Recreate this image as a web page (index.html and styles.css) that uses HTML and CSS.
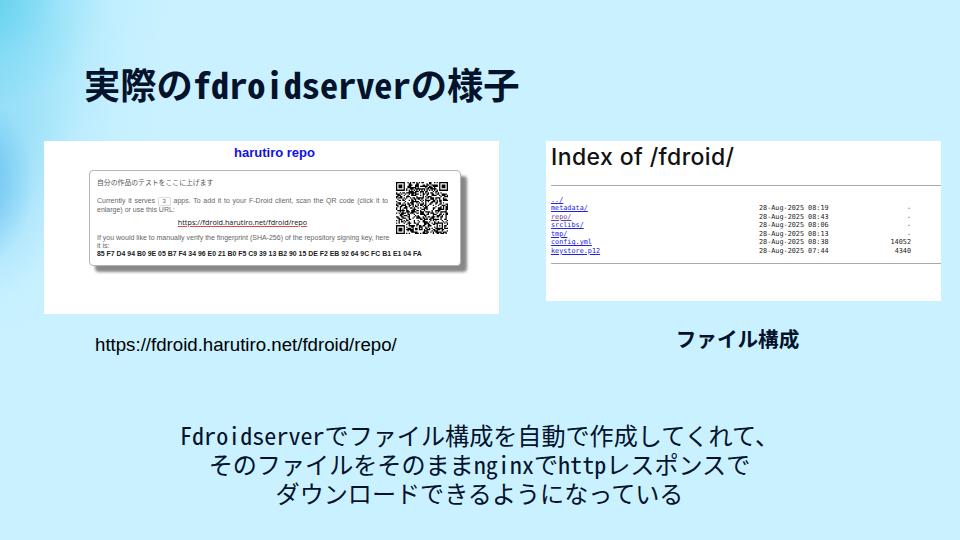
FILE: index.html
```
<!DOCTYPE html>
<html lang="ja">
<head>
<meta charset="utf-8">
<title>実際のfdroidserverの様子</title>
<link rel="stylesheet" href="styles.css">
</head>
<body>
<main class="slide">
  <h1 class="title">実際のfdroidserverの様子</h1>
  <div class="columns">
    <figure class="col repo-col">
      <div class="shot repo">
        <h2 class="repo-name">harutiro repo</h2>
        <div class="card">
          <svg class="qr" id="qr" viewBox="0 0 41 41"></svg>
          <p class="desc">自分の作品のテストをここに上げます</p>
          <div class="para">
            <p class="line fill">Currently it serves <span class="count">3</span> apps. To add it to your F-Droid client, scan the QR code (click it to</p>
            <p class="line">enlarge) or use this URL:</p>
          </div>
          <p class="url"><span>https://fdroid.harutiro.net/fdroid/repo</span></p>
          <p class="line fill">If you would like to manually verify the fingerprint (SHA-256) of the repository signing key, here</p>
          <p class="line">it is:</p>
          <p class="finger" id="finger">85 F7 D4 94 B0 9E 05 B7 F4 34 96 E0 21 B0 F5 C9 39 13 B2 90 15 DE F2 EB 92 64 9C FC B1 E1 04 FA</p>
        </div>
      </div>
      <figcaption class="link-caption">https://fdroid.harutiro.net/fdroid/repo/</figcaption>
    </figure>
    <figure class="col index-col">
      <div class="shot index">
        <h2 class="index-title">Index of /fdroid/</h2>
        <div class="listing">
          <div class="row"><a>../</a></div>
          <div class="row"><a>metadata/</a><span>28-Aug-2025 08:19</span><span class="size">-</span></div>
          <div class="row"><a class="visited">repo/</a><span>28-Aug-2025 08:43</span><span class="size">-</span></div>
          <div class="row"><a>srclibs/</a><span>28-Aug-2025 08:06</span><span class="size">-</span></div>
          <div class="row"><a>tmp/</a><span>28-Aug-2025 08:13</span><span class="size">-</span></div>
          <div class="row"><a>config.yml</a><span>28-Aug-2025 08:38</span><span class="size">14052</span></div>
          <div class="row"><a>keystore.p12</a><span>28-Aug-2025 07:44</span><span class="size">4340</span></div>
        </div>
      </div>
      <figcaption class="file-caption">ファイル構成</figcaption>
    </figure>
  </div>
  <p class="summary">Fdroidserverでファイル構成を自動で作成してくれて、<br>そのファイルをそのままnginxでhttpレスポンスで<br>ダウンロードできるようになっている</p>
</main>
<script src="qr.js"></script>
</body>
</html>
```
FILE: styles.css
```
* { box-sizing: border-box; }
body { margin: 0; }
h1, h2, p, figure { margin: 0; }

.slide {
  width: 960px;
  height: 540px;
  overflow: hidden;
  display: flex;
  flex-direction: column;
  color: #04122b;
  font-family: "Noto Sans CJK JP", sans-serif;
  background:
    radial-gradient(ellipse 200px 170px at -30px -10px, rgba(84, 203, 235, .9) 0%, rgba(95, 208, 238, .75) 20%, rgba(125, 219, 244, .45) 45%, rgba(165, 231, 251, .2) 70%, rgba(201, 241, 255, 0) 100%),
    radial-gradient(ellipse 95px 130px at -30px 182px, rgba(90, 186, 238, .85) 0%, rgba(105, 194, 240, .65) 35%, rgba(150, 217, 249, .25) 68%, rgba(201, 241, 255, 0) 100%),
    radial-gradient(ellipse 195px 265px at -30px 80px, rgba(125, 213, 243, .9) 0%, rgba(135, 218, 245, .7) 30%, rgba(165, 229, 251, .35) 60%, rgba(185, 237, 254, .15) 80%, rgba(201, 241, 255, 0) 100%),
    #c9f1ff;
}

.title {
  height: 141px;
  padding: 57px 0 0 84px;
  font-size: 36.3px;
  line-height: 53px;
  font-weight: 700;
  white-space: nowrap;
  font-feature-settings: "hwid";
}

.columns {
  display: flex;
  align-items: flex-start;
  gap: 47px;
  height: 279px;
  padding-left: 44px;
}
.shot { background: #fff; overflow: hidden; }

.repo { width: 455px; height: 173px; font-family: "Liberation Sans", sans-serif; padding-left: 45px; }
.repo-name {
  margin: 3px 0 0 -39px;
  width: 449px;
  text-align: center;
  font-size: 13px;
  line-height: 17px;
  color: #1010e8;
}
.card {
  display: flow-root;
  margin-top: 9px;
  width: 372px;
  height: 96px;
  padding: 6px 0 0 7px;
  border: 1px solid #b5b5b5;
  border-radius: 4px;
  background: #fff;
  box-shadow: 6px 6px 3px #888;
}
.qr { float: right; width: 52px; height: 52px; margin: 5px 12px 0 0; display: block; }
.desc {
  font-family: "Noto Sans CJK JP", sans-serif;
  font-size: 6.85px;
  line-height: 10px;
  color: #555;
}
.line { width: 291px; font-size: 7px; line-height: 8px; color: #666; white-space: nowrap; }
.fill { text-align: justify; text-align-last: justify; }
.para { margin-top: 10px; }
.count {
  display: inline-block;
  width: 13px;
  height: 9px;
  border: 1px solid #ddd;
  border-radius: 1px;
  line-height: 7px;
  font-size: 6px;
  text-align: center;
  text-align-last: center;
}
.url {
  width: 291px;
  margin: 4px 0 7px;
  text-align: center;
  font: 7.25px/9px "Open Sans", sans-serif;
  color: #111;
}
.url span { text-decoration: underline #e04848 1px; text-underline-offset: 1px; }
.finger { font-size: 6.91px; line-height: 8px; font-weight: 700; color: #222; white-space: nowrap; }

.link-caption {
  margin: 20px 0 0 51px;
  font: 18.67px/22px "Liberation Sans", sans-serif;
  color: #000;
}

.index { width: 395px; height: 160px; padding-left: 5px; }
.index-title {
  height: 44px;
  padding-top: 1px;
  font-family: Inter, sans-serif;
  font-size: 23px;
  line-height: 31px;
  letter-spacing: .4px;
  font-weight: 500;
  color: #111;
}
.listing {
  height: 79px;
  padding-top: 10px;
  border-top: 1px solid #aaa;
  border-bottom: 1px solid #aaa;
}
.row {
  display: grid;
  grid-template-columns: 208px 90px 62px;
  height: 8.45px;
  font: 6.8px/8.45px "DejaVu Sans Mono", monospace;
  color: #222;
}
.row a { color: #2222e0; text-decoration: underline; justify-self: start; }
.row .visited { color: #70409c; }
.size { text-align: right; }

.file-caption {
  margin: 22px 0 0 -12px;
  text-align: center;
  font-size: 20.6px;
  line-height: 30px;
  font-weight: 700;
}

.summary {
  margin-left: -1px;
  text-align: center;
  font-size: 24.1px;
  line-height: 29px;
  white-space: nowrap;
  font-feature-settings: "hwid";
}
```
FILE: qr.js
```
// Version 6, level M QR code of the repository address and its fingerprint.
const SIZE = 41, DATA = 108, BLOCKS = 4, ECC = 16;
const address = 'https://fdroid.harutiro.net/fdroid/repo?fingerprint=';
const finger = document.getElementById('finger').textContent.replace(/ /g, '');

const bits = [];
const put = (v, n) => { for (let i = n - 1; i >= 0; i--) bits.push(v >> i & 1); };
put(4, 4); put(address.length, 8);
for (const c of address) put(c.charCodeAt(0), 8);
put(2, 4); put(finger.length, 9);
const alnum = '0123456789ABCDEF';
for (let i = 0; i < finger.length; i += 2) put(alnum.indexOf(finger[i]) * 45 + alnum.indexOf(finger[i + 1]), 11);
put(0, 4);
while (bits.length % 8) bits.push(0);
const data = [];
for (let i = 0; i < bits.length; i += 8) data.push(parseInt(bits.slice(i, i + 8).join(''), 2));
for (let p = 0xec; data.length < DATA; p ^= 0xec ^ 0x11) data.push(p);

const mul = (a, b) => {
  let r = 0;
  for (; b; b >>= 1) { if (b & 1) r ^= a; a = a << 1 ^ (a & 128 ? 0x11d : 0); }
  return r;
};
const gen = new Array(ECC).fill(0);
gen[ECC - 1] = 1;
for (let i = 0, root = 1; i < ECC; i++, root = mul(root, 2))
  for (let j = 0; j < ECC; j++) gen[j] = mul(gen[j], root) ^ (j + 1 < ECC ? gen[j + 1] : 0);
const check = block => {
  const rem = new Array(ECC).fill(0);
  for (const b of block) {
    const f = b ^ rem.shift();
    rem.push(0);
    gen.forEach((g, i) => { rem[i] ^= mul(g, f); });
  }
  return rem;
};
const per = DATA / BLOCKS, blocks = [];
for (let b = 0; b < BLOCKS; b++) blocks.push(data.slice(b * per, (b + 1) * per));
const checks = blocks.map(check), words = [];
for (let i = 0; i < per; i++) blocks.forEach(b => words.push(b[i]));
for (let i = 0; i < ECC; i++) checks.forEach(c => words.push(c[i]));

const masks = [
  (x, y) => (x + y) % 2, (x, y) => y % 2, (x, y) => x % 3, (x, y) => (x + y) % 3,
  (x, y) => ((x / 3 | 0) + (y >> 1)) % 2, (x, y) => x * y % 2 + x * y % 3,
  (x, y) => (x * y % 2 + x * y % 3) % 2, (x, y) => ((x + y) % 2 + x * y % 3) % 2
];
function build(mask) {
  const m = Array.from({ length: SIZE }, () => new Array(SIZE).fill(-1));
  const set = (x, y, v) => { if (x >= 0 && y >= 0 && x < SIZE && y < SIZE) m[y][x] = v ? 1 : 0; };
  for (let i = 0; i < SIZE; i++) { set(6, i, i % 2 === 0); set(i, 6, i % 2 === 0); }
  for (const [cx, cy] of [[3, 3], [SIZE - 4, 3], [3, SIZE - 4]])
    for (let dy = -4; dy <= 4; dy++) for (let dx = -4; dx <= 4; dx++) {
      const d = Math.max(Math.abs(dx), Math.abs(dy));
      set(cx + dx, cy + dy, d !== 2 && d !== 4);
    }
  for (let dy = -2; dy <= 2; dy++) for (let dx = -2; dx <= 2; dx++)
    set(34 + dx, 34 + dy, Math.max(Math.abs(dx), Math.abs(dy)) !== 1);
  let rem = mask;
  for (let i = 0; i < 10; i++) rem = rem << 1 ^ (rem >> 9) * 0x537;
  const f = (mask << 10 | rem) ^ 0x5412, bit = i => f >> i & 1;
  for (let i = 0; i <= 5; i++) set(8, i, bit(i));
  set(8, 7, bit(6)); set(8, 8, bit(7)); set(7, 8, bit(8));
  for (let i = 9; i < 15; i++) set(14 - i, 8, bit(i));
  for (let i = 0; i < 8; i++) set(SIZE - 1 - i, 8, bit(i));
  for (let i = 8; i < 15; i++) set(8, SIZE - 15 + i, bit(i));
  set(8, SIZE - 8, 1);
  let n = 0;
  for (let right = SIZE - 1; right >= 1; right -= 2) {
    if (right === 6) right = 5;
    for (let v = 0; v < SIZE; v++) for (let j = 0; j < 2; j++) {
      const x = right - j, y = (right + 1 & 2) === 0 ? SIZE - 1 - v : v;
      if (m[y][x] !== -1) continue;
      const w = n < words.length * 8 ? words[n >> 3] >> 7 - (n & 7) & 1 : 0;
      n++;
      m[y][x] = w ^ (masks[mask](x, y) === 0 ? 1 : 0);
    }
  }
  return m;
}
function penalty(m) {
  let p = 0, dark = 0;
  const cols = m.map((_, x) => m.map(r => r[x]));
  for (const r of [...m, ...cols]) {
    const s = r.join('');
    for (const run of s.match(/0+|1+/g)) if (run.length >= 5) p += run.length - 2;
    for (let i = 0; i + 11 <= SIZE; i++) {
      const t = s.slice(i, i + 11);
      if (t === '10111010000' || t === '00001011101') p += 40;
    }
  }
  for (let y = 0; y < SIZE; y++) for (let x = 0; x < SIZE; x++) {
    dark += m[y][x];
    if (x && y) {
      const q = m[y][x] + m[y - 1][x] + m[y][x - 1] + m[y - 1][x - 1];
      if (q === 0 || q === 4) p += 3;
    }
  }
  return p + Math.floor(Math.abs(dark / SIZE / SIZE * 100 - 50) / 5) * 10;
}
const best = masks.map((_, i) => build(i)).sort((a, b) => penalty(a) - penalty(b))[0];
let d = '';
best.forEach((r, y) => r.forEach((v, x) => { if (v) d += `M${x} ${y}h1v1h-1z`; }));
document.getElementById('qr').innerHTML = `<path d="${d}"/>`;
```
